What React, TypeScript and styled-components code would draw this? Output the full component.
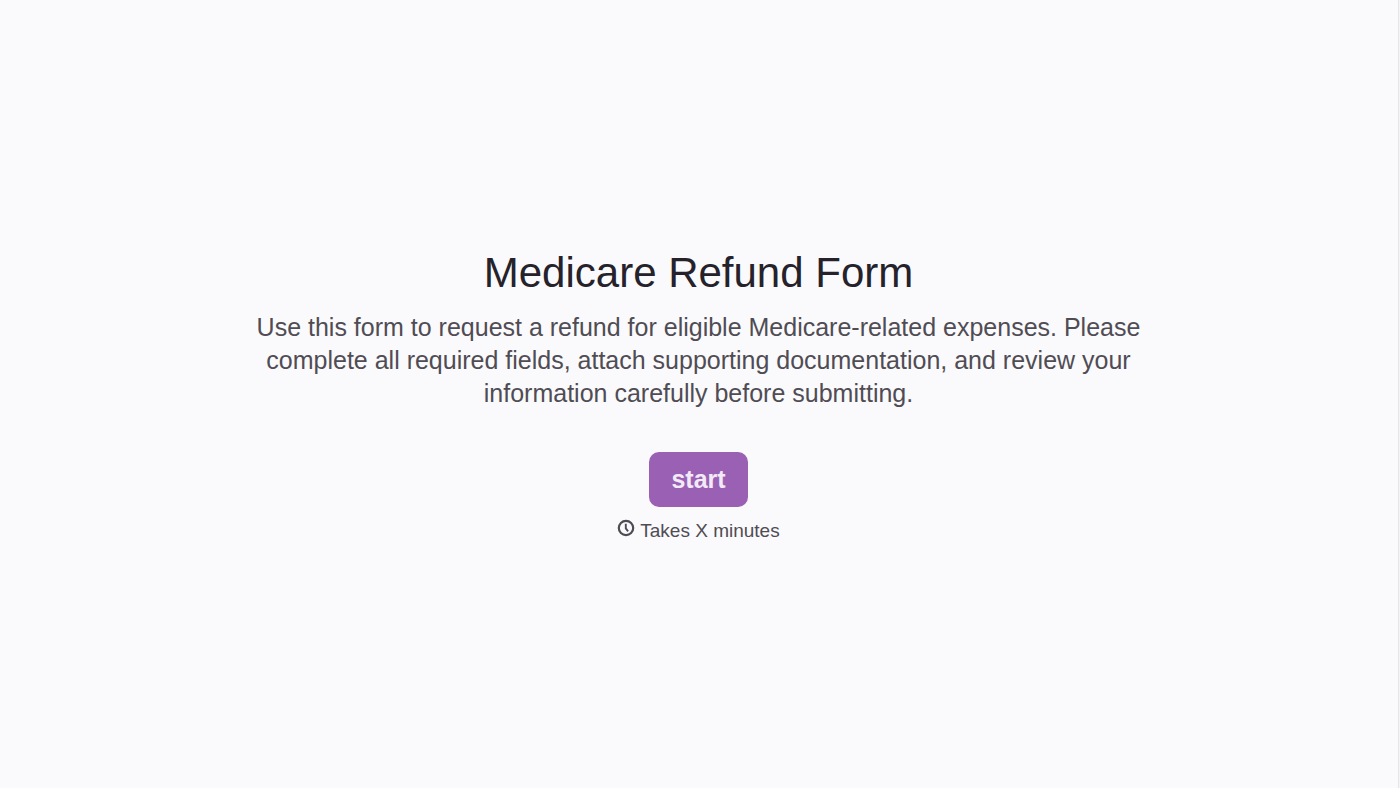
import React from "react";
import styled, { createGlobalStyle } from "styled-components";

const GlobalStyle = createGlobalStyle`
  *, *::before, *::after { box-sizing: border-box; }
  body {
    margin: 0;
    background: #f4f4f6;
    font-family: "Liberation Sans", Arial, sans-serif;
  }
`;

const Page = styled.main`
  min-height: 100vh;
  display: flex;
  align-items: center;
  justify-content: center;
  margin-right: 1px;
  padding: 26px 25px 24px 24px;
  border-right: 1px solid #e6e6e9;
  background: #fafafc;
`;

const Welcome = styled.section`
  display: flex;
  flex-direction: column;
  align-items: center;
  max-width: 900px;
  text-align: center;
`;

const Title = styled.h1`
  margin: 0 0 12px;
  font-size: 42px;
  line-height: 52px;
  font-weight: 400;
  color: #26222b;
`;

const Description = styled.p`
  margin: 0 0 42px;
  font-size: 25px;
  line-height: 33px;
  color: #504c54;
`;

const StartButton = styled.button`
  height: 55px;
  padding: 0 22px;
  border: 0;
  border-radius: 10px;
  background: #9a60b4;
  color: #f3eaf7;
  font-family: inherit;
  font-size: 25px;
  font-weight: 700;
  cursor: pointer;
`;

const Duration = styled.p`
  display: flex;
  align-items: flex-start;
  gap: 5px;
  margin: 12px 0 0;
  font-size: 19px;
  line-height: 24px;
  color: #504c54;
`;

const ClockIcon = () => (
  <svg width="18" height="18" viewBox="0 0 18 18" fill="none" stroke="currentColor" aria-hidden="true">
    <circle cx="9" cy="9" r="7.2" strokeWidth="2.2" />
    <path d="M8.8 4.8v4.6l2.3 3" strokeWidth="1.9" />
  </svg>
);

export default function App() {
  return (
    <>
      <GlobalStyle />
      <Page>
        <Welcome>
          <Title>Medicare Refund Form</Title>
          <Description>
            Use this form to request a refund for eligible Medicare-related expenses. Please complete all
            required fields, attach supporting documentation, and review your information carefully before
            submitting.
          </Description>
          <StartButton type="button">start</StartButton>
          <Duration>
            <ClockIcon />
            Takes X minutes
          </Duration>
        </Welcome>
      </Page>
    </>
  );
}
